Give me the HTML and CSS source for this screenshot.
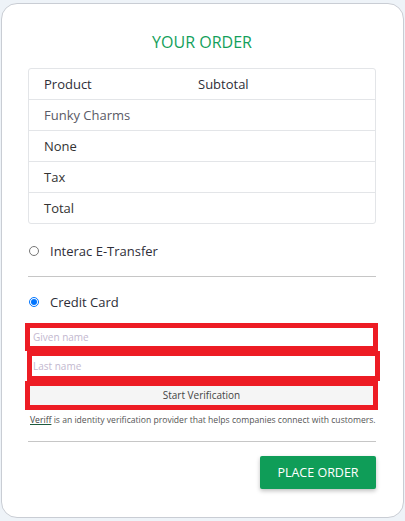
FILE: index.html
```html
<!DOCTYPE html>
<html>
<head>
<meta charset="utf-8">
<link rel="stylesheet" href="styles.css">
</head>
<body>
<div class="card">
  <h2 class="title">YOUR ORDER</h2>
  <table class="order">
    <tr class="head"><td class="c1">Product</td><td>Subtotal</td></tr>
    <tr class="light"><td class="c1">Funky Charms</td><td></td></tr>
    <tr><td class="c1">None</td><td></td></tr>
    <tr><td class="c1">Tax</td><td></td></tr>
    <tr><td class="c1">Total</td><td></td></tr>
  </table>
  <label class="pay first"><input type="radio" name="pay"><span>Interac E-Transfer</span></label>
  <div class="rule"></div>
  <label class="pay"><input type="radio" name="pay" checked><span>Credit Card</span></label>
  <div class="verify">
    <input class="field f1" type="text" placeholder="Given name">
    <input class="field f2" type="text" placeholder="Last name">
    <button class="field startbtn" type="button">Start Verification</button>
  </div>
  <p class="note"><a class="link">Veriff</a> is an identity verification provider that helps companies connect with customers.</p>
  <div class="rule rule2"></div>
  <div class="actions"><button class="place" type="button">PLACE ORDER</button></div>
</div>
</body>
</html>
```
FILE: styles.css
```css
html, body { margin: 0; padding: 0; }
body {
  background: #eef3f8;
  font-family: "Open Sans", "DejaVu Sans", sans-serif;
  color: #333;
  width: 405px;
  height: 521px;
  overflow: hidden;
}
.card {
  box-sizing: border-box;
  margin: 3px 1px 0 1px;
  height: 515px;
  background: #fff;
  border: 1px solid #c9cdd4;
  border-radius: 16px;
  padding: 0 27px 0 26px;
}
.title {
  margin: 0;
  padding-top: 27px;
  line-height: 22px;
  font-size: 16px;
  font-weight: 400;
  text-align: center;
  color: #139f5b;
}
.order {
  margin-top: 15px;
  width: 100%;
  border-collapse: separate;
  border-spacing: 0;
  border: 1px solid #e3e5e8;
  border-radius: 3px;
  font-size: 13px;
}
.order td {
  height: 30px;
  padding: 0 15px;
  border-bottom: 1px solid #e3e5e8;
  vertical-align: middle;
}
.order tr:last-child td { border-bottom: 0; }
.order .c1 { width: 124px; }
.order .head td { color: #2e2e38; }
.order .light td { color: #5a5a66; }
.pay {
  display: flex;
  align-items: center;
  height: 20px;
  font-size: 13px;
  color: #2e2e38;
}
.pay.first { margin-top: 17px; }
.pay input {
  width: 10px;
  height: 10px;
  margin: 0 11px 0 1px;
}
.rule {
  height: 1px;
  background: #c6c6c6;
  margin: 15px 0 15px 0;
}
.verify {
  margin-top: 11px;
  display: flex;
  flex-direction: column;
  margin-left: -3px;
  margin-right: -2px;
}
.field {
  box-sizing: border-box;
  border: 5px solid #ed1c24;
  background: #fff;
  font-family: inherit;
  font-size: 10px;
  outline: none;
  margin: 0;
}
.f1 { height: 28px; padding: 0 3px; }
.f2 { height: 30px; padding: 0 1px; margin-left: 2px; margin-right: -2px; }
.field::placeholder { color: #c3b8cf; }
.startbtn {
  height: 29px;
  background: #f5f5f5;
  color: #444;
  text-align: center;
  padding-bottom: 3px;
}
.note {
  margin: 4px 0 0 0;
  padding-left: 2px;
  font-size: 8.6px;
  color: #555;
  white-space: nowrap;
}
.link {
  color: #444;
  text-decoration: underline;
  text-decoration-color: #1d5a3e;
}
.rule2 { margin: 15px 0 14px 0; }
.actions { display: flex; justify-content: flex-end; }
.place {
  width: 116px;
  height: 33px;
  border: 0;
  border-radius: 2px;
  background: #0f9d58;
  color: #fff;
  font-family: inherit;
  font-size: 12.5px;
  box-shadow: 0 2px 4px rgba(0,0,0,0.25);
}
```
